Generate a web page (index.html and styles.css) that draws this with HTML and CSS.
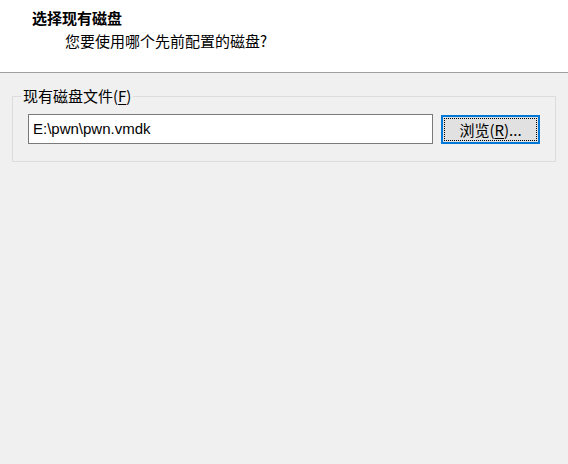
FILE: index.html
```html
<!DOCTYPE html>
<html lang="zh-CN">
<head>
<meta charset="utf-8">
<link rel="stylesheet" href="styles.css">
</head>
<body>
<div class="header">
  <div class="title">选择现有磁盘</div>
  <div class="subtitle">您要使用哪个先前配置的磁盘?</div>
</div>
<div class="content">
  <div class="group">
    <span class="legend">现有磁盘文件(<u>F</u>)</span>
    <div class="row">
      <div class="input">E:\pwn\pwn.vmdk</div>
      <div class="button"><span class="focus">浏览(<u>R</u>)...</span></div>
    </div>
  </div>
</div>
</body>
</html>
```
FILE: styles.css
```css
html, body {
  margin: 0;
  padding: 0;
}
body {
  width: 568px;
  height: 464px;
  background: #f0f0f0;
  font-family: "Noto Sans CJK SC", "Liberation Sans", sans-serif;
  font-size: 15px;
  color: #000;
  overflow: hidden;
}
.header {
  background: #fff;
  height: 72px;
  border-bottom: 1px solid #a0a0a0;
  box-sizing: border-box;
  height: 73px;
  padding: 7px 0 0 32px;
}
.title {
  font-weight: bold;
  line-height: 22px;
}
.subtitle {
  padding-left: 33px;
  line-height: 22px;
  margin-top: 1px;
}
.content {
  padding: 23px 12px 0 12px;
}
.group {
  position: relative;
  border: 1px solid #dcdcdc;
  height: 64px;
}
.legend {
  position: absolute;
  left: 8px;
  top: -11px;
  padding: 0 2px;
  background: #f0f0f0;
  line-height: 20px;
}
.legend u, .button u {
  text-decoration-thickness: 1px;
  text-underline-offset: 2px;
}
.row {
  display: flex;
  align-items: flex-start;
  gap: 8px;
  padding: 17px 0 0 15px;
}
.input {
  box-sizing: border-box;
  width: 405px;
  height: 30px;
  border: 1px solid #7a7a7a;
  background: #fff;
  font-family: "Liberation Sans", "Noto Sans CJK SC", sans-serif;
  font-size: 15px;
  line-height: 27px;
  padding-left: 4px;
}
.button {
  box-sizing: border-box;
  margin-top: 1px;
  width: 99px;
  height: 29px;
  border: 2px solid #0078d7;
  background: #e1e1e1;
  padding: 1px;
  display: flex;
}
.focus {
  flex: 1;
  border: 1px dotted #000;
  display: flex;
  align-items: center;
  justify-content: center;
  line-height: 20px;
}
```
